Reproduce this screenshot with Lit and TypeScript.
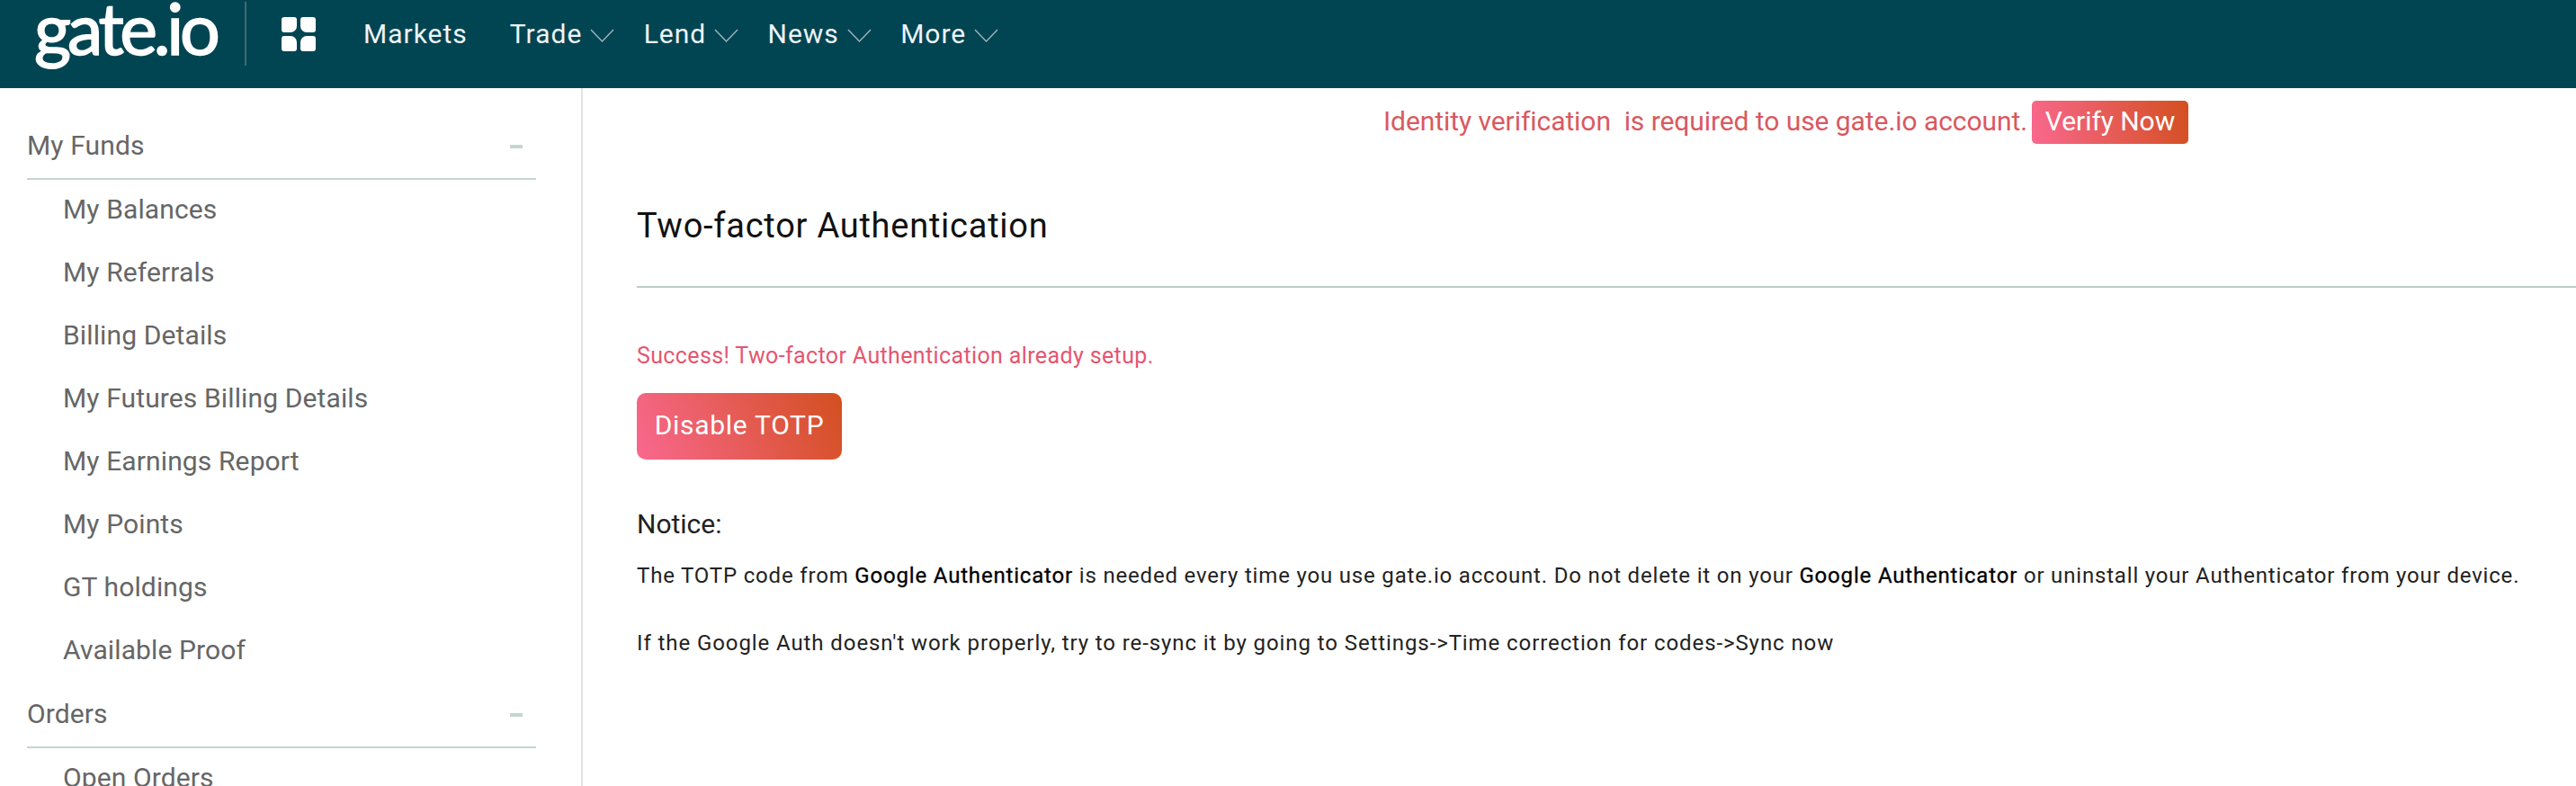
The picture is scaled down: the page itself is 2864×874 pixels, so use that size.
import { LitElement, html, css } from "lit";
import { customElement } from "lit/decorators.js";

const chevron = html`<svg class="chev" width="27" height="15" viewBox="0 0 27 15"><path d="M1 1 L13.5 14 L26 1" fill="none" stroke="#9fb4b9" stroke-width="1.4"/></svg>`;

const groups = [
  { title: "My Funds", items: ["My Balances", "My Referrals", "Billing Details", "My Futures Billing Details", "My Earnings Report", "My Points", "GT holdings", "Available Proof"] },
  { title: "Orders", items: ["Open Orders"] },
];

@customElement("app-root")
export class AppRoot extends LitElement {
  static styles = css`
    :host { display: block; height: 874px; overflow: hidden; background: #fff; font-family: Roboto, "Open Sans", sans-serif; }
    .top { height: 98px; background: #024552; display: flex; align-items: flex-start; color: #eef4fa; }
    .logo { width: 158px; margin-left: 38px; height: 98px; font-family: Lato, sans-serif; font-size: 79px; line-height: 62px; letter-spacing: -4.2px; color: #fff; font-weight: 400; white-space: nowrap; -webkit-text-stroke: 1.6px #fff; }
    .sep { width: 2px; height: 71px; margin: 2px 0 0 76px; background: #3c6b75; }
    .grid { display: grid; grid-template-columns: 17px 17px; grid-template-rows: 17px 17px; gap: 4px 4px; margin: 19px 0 0 39px; }
    .grid i { background: #fff; }
    .grid i:nth-child(1) { border-radius: 3px 3px 7px 3px; }
    .grid i:nth-child(2) { border-radius: 3px 3px 3px 7px; }
    .grid i:nth-child(3) { border-radius: 3px 7px 3px 3px; }
    .grid i:nth-child(4) { border-radius: 7px 3px 3px 3px; }
    .nav { display: flex; height: 74px; align-items: center; font-size: 30px; letter-spacing: 1px; }
    .nav .it { display: flex; align-items: center; white-space: nowrap; }
    .m0 { margin-left: 53px; }
    .m1 { margin-left: 47px; }
    .m2 { margin-left: 32.3px; }
    .chev { margin-left: 9px; margin-top: 4px; }
    .body { display: flex; height: 776px; }
    .side { width: 648px; flex: none; box-sizing: border-box; border-right: 2px solid #dfe3e3; padding: 0 50px 0 30px; color: #666; font-size: 30px; letter-spacing: .12px; }
    .gh { height: 72px; display: flex; justify-content: space-between; align-items: center; border-bottom: 2px solid #c5d5d1; box-sizing: border-box; padding-bottom: 4px; }
    .group:first-child .gh { margin-top: 30px; }
    .dash { width: 14px; height: 4px; background: #c5d5d1; margin: 3px 15px 0 0; }
    .item { height: 70px; line-height: 66px; padding-left: 40px; white-space: nowrap; }
    .main { flex: 1; min-width: 0; color: #111; }
    .banner { display: flex; align-items: center; height: 48px; margin-top: 14px; padding-left: 890px; color: #d9595f; font-size: 30px; letter-spacing: -.07px; white-space: nowrap; }
    .btxt { padding-bottom: 3px; }
    .vbtn { margin-left: 5px; width: 174px; height: 48px; padding-bottom: 3px; box-sizing: border-box; display: flex; align-items: center; justify-content: center; border-radius: 5px; color: #fff; background: linear-gradient(75deg, #f9688f, #d34f1f); font-size: 30px; }
    .ct { padding-left: 60px; }
    .title { height: 160px; border-bottom: 2px solid #bccdc9; box-sizing: border-box; font-size: 38px; letter-spacing: .75px; line-height: 182px; margin: 0; font-weight: 400; color: #111; }
    .ok { color: #e5566f; font-size: 25px; letter-spacing: .37px; line-height: 34px; margin-top: 59px; }
    .dis { width: 228px; height: 74px; margin-top: 24px; padding-bottom: 4px; box-sizing: border-box; border-radius: 10px; display: flex; align-items: center; justify-content: center; color: #fff; background: linear-gradient(65deg, #f9688f, #d34f1f); font-size: 30px; letter-spacing: .7px; }
    .notice { font-size: 30px; line-height: 40px; margin-top: 52px; color: #222; }
    p { margin: 0; font-size: 24px; line-height: 34px; color: #222; white-space: nowrap; }
    .p1 { margin-top: 20px; letter-spacing: .82px; }
    .p2 { margin-top: 41px; letter-spacing: .91px; }
    b { font-weight: 400; color: #000; -webkit-text-stroke: .3px #000; }
  `;

  render() {
    return html`
      <header class="top">
        <div class="logo">gate.io</div>
        <div class="sep"></div>
        <div class="grid"><i></i><i></i><i></i><i></i></div>
        <nav class="nav">
          <span class="it m0">Markets</span>
          <span class="it m1">Trade${chevron}</span>
          <span class="it m2">Lend${chevron}</span>
          <span class="it m2">News${chevron}</span>
          <span class="it m2">More${chevron}</span>
        </nav>
      </header>
      <div class="body">
        <aside class="side">
          ${groups.map((g) => html`<div class="group">
            <div class="gh"><span>${g.title}</span><span class="dash"></span></div>
            ${g.items.map((i) => html`<div class="item">${i}</div>`)}
          </div>`)}
        </aside>
        <main class="main">
          <div class="banner"><span class="btxt">Identity verification&nbsp; is required to use gate.io account.</span><span class="vbtn">Verify Now</span></div>
          <div class="ct">
            <h1 class="title">Two-factor Authentication</h1>
            <div class="ok">Success! Two-factor Authentication already setup.</div>
            <div class="dis">Disable TOTP</div>
            <div class="notice">Notice:</div>
            <p class="p1">The TOTP code from <b>Google Authenticator</b> is needed every time you use gate.io account. Do not delete it on your <b>Google Authenticator</b> or uninstall your Authenticator from your device.</p>
            <p class="p2">If the Google Auth doesn't work properly, try to re-sync it by going to Settings-&gt;Time correction for codes-&gt;Sync now</p>
          </div>
        </main>
      </div>
    `;
  }
}
